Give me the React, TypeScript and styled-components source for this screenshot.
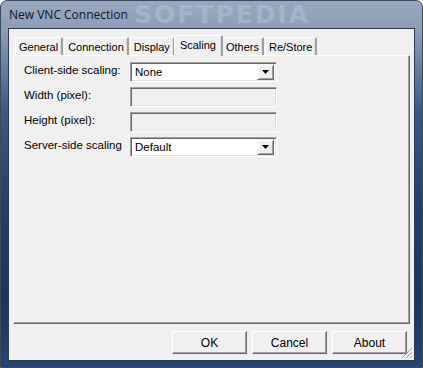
import { useState } from 'react';
import styled, { createGlobalStyle } from 'styled-components';

const GlobalStyle = createGlobalStyle`
  html, body {
    margin: 0;
    padding: 0;
    background: #ffffff;
  }
  body {
    font-family: Tahoma, "Liberation Sans", Arial, sans-serif;
    font-size: 11.5px;
    color: #000;
  }
`;

const Window = styled.div`
  position: relative;
  width: 423px;
  height: 368px;
  box-sizing: border-box;
  display: flex;
  flex-direction: column;
  padding: 0 7px 6px 7px;
  border: 1px solid #3c4a60;
  border-radius: 7px 7px 0 0;
  background: linear-gradient(
    to bottom,
    #9aa8be 0px,
    #8d9cb5 30px,
    #6f84a4 60px,
    #3d5882 110px,
    #26406a 200px,
    #1c345b 300px,
    #2a4570 368px
  );
  overflow: hidden;
`;

const TitleBar = styled.div`
  position: relative;
  height: 27px;
  display: flex;
  align-items: center;
  padding-left: 1px;
  font-family: "Open Sans", "Noto Sans", sans-serif;
  font-size: 12px;
  color: #101828;
`;

const Watermark = styled.div`
  position: absolute;
  left: 126px;
  top: 0;
  height: 27px;
  display: flex;
  align-items: center;
  font-family: "DejaVu Sans", sans-serif;
  font-weight: bold;
  font-size: 25px;
  line-height: 27px;
  letter-spacing: 2px;
  color: rgba(190, 208, 232, 0.4);
  pointer-events: none;
  white-space: nowrap;
`;

const Client = styled.div`
  flex: 1;
  display: flex;
  flex-direction: column;
  background: #f0f0f0;
  border: 1px solid #2c3a50;
  padding: 6px 4px 6px 4px;
  min-height: 0;
`;

const TabStrip = styled.div`
  display: flex;
  align-items: flex-end;
  gap: 1px;
  height: 20px;
  padding-left: 2px;
  position: relative;
  z-index: 1;
`;

const Tab = styled.div<{ $active?: boolean }>`
  box-sizing: border-box;
  height: ${({ $active }) => ($active ? '21px' : '18px')};
  margin-bottom: ${({ $active }) => ($active ? '-1px' : '0')};
  margin-left: ${({ $active }) => ($active ? '-2px' : '0')};
  margin-right: ${({ $active }) => ($active ? '-2px' : '0')};
  padding: ${({ $active }) => ($active ? '2px 5px 0 5px' : '2px 3px 0 3px')};
  background: #f0f0f0;
  border-top: 1px solid #ffffff;
  border-left: 1px solid #ffffff;
  border-right: 2px solid #a0a0a0;
  box-shadow: inset -1px 0 0 #dcdcdc;
  border-radius: 2px 2px 0 0;
  color: #000;
  line-height: 14px;
  white-space: nowrap;
  font-size: 11px;
  position: relative;
  z-index: ${({ $active }) => ($active ? 2 : 1)};
`;

const Panel = styled.div`
  flex: 1;
  box-sizing: border-box;
  border-top: 1px solid #ffffff;
  border-left: 1px solid #ffffff;
  border-right: 1px solid #696969;
  border-bottom: 1px solid #696969;
  box-shadow: inset -1px -1px 0 #a0a0a0;
  padding: 6px 10px;
`;

const FormGrid = styled.div`
  display: grid;
  grid-template-columns: 106px 147px;
  grid-auto-rows: 20px;
  row-gap: 5px;
`;

const FieldLabel = styled.label`
  font-size: 11.5px;
  line-height: 14px;
  padding-top: 1px;
  white-space: nowrap;
`;

const Sunken = styled.div<{ $disabled?: boolean }>`
  box-sizing: border-box;
  height: 20px;
  display: flex;
  align-items: center;
  border-top: 1px solid #a0a0a0;
  border-left: 1px solid #a0a0a0;
  border-right: 1px solid #ffffff;
  border-bottom: 1px solid #ffffff;
  box-shadow: inset 1px 1px 0 #696969, inset -1px -1px 0 #e3e3e3;
  background: ${({ $disabled }) => ($disabled ? '#f0f0f0' : '#ffffff')};
  padding: 2px;
`;

const ComboText = styled.div`
  flex: 1;
  padding-left: 2px;
  font-size: 11.5px;
  line-height: 14px;
`;

const ComboButton = styled.div`
  box-sizing: border-box;
  width: 17px;
  height: 16px;
  display: flex;
  align-items: center;
  justify-content: center;
  background: #f0f0f0;
  border-top: 1px solid #f0f0f0;
  border-left: 1px solid #f0f0f0;
  border-right: 1px solid #696969;
  border-bottom: 1px solid #696969;
  box-shadow: inset 1px 1px 0 #ffffff, inset -1px -1px 0 #a0a0a0;
`;

const ButtonRow = styled.div`
  display: flex;
  justify-content: flex-end;
  gap: 5px;
  padding-top: 7px;
  padding-right: 3px;
`;

const PushButton = styled.button`
  box-sizing: border-box;
  width: 75px;
  height: 23px;
  background: #f0f0f0;
  border-top: 1px solid #ffffff;
  border-left: 1px solid #ffffff;
  border-right: 1px solid #696969;
  border-bottom: 1px solid #696969;
  box-shadow: inset -1px -1px 0 #a0a0a0;
  font-family: inherit;
  font-size: 12px;
  color: #000;
  padding: 0;
`;

const Grip = styled.svg`
  position: absolute;
  right: 9px;
  bottom: 8px;
`;

function Combo({ value }: { value: string }) {
  return (
    <Sunken>
      <ComboText>{value}</ComboText>
      <ComboButton>
        <svg width="7" height="4" viewBox="0 0 7 4">
          <path d="M0 0H7L3.5 4Z" fill="#000" />
        </svg>
      </ComboButton>
    </Sunken>
  );
}

const TABS = ['General', 'Connection', 'Display', 'Scaling', 'Others', 'Re/Store'];

export default function App() {
  const [active, setActive] = useState('Scaling');

  return (
    <>
      <GlobalStyle />
      <Window>
        <TitleBar>
          New VNC Connection
          <Watermark>SOFTPEDIA</Watermark>
        </TitleBar>
        <Client>
          <TabStrip>
            {TABS.map((t) => (
              <Tab key={t} $active={t === active} onClick={() => setActive(t)}>
                {t}
              </Tab>
            ))}
          </TabStrip>
          <Panel>
            <FormGrid>
              <FieldLabel>Client-side scaling:</FieldLabel>
              <Combo value="None" />
              <FieldLabel>Width (pixel):</FieldLabel>
              <Sunken $disabled />
              <FieldLabel>Height (pixel):</FieldLabel>
              <Sunken $disabled />
              <FieldLabel>Server-side scaling</FieldLabel>
              <Combo value="Default" />
            </FormGrid>
          </Panel>
          <ButtonRow>
            <PushButton>OK</PushButton>
            <PushButton>Cancel</PushButton>
            <PushButton>About</PushButton>
          </ButtonRow>
        </Client>
        <Grip width="12" height="12" viewBox="0 0 12 12">
          <path d="M11 1L1 11M11 5L5 11M11 9L9 11" stroke="#a0a0a0" strokeWidth="1" />
          <path d="M12 2L2 12M12 6L6 12M12 10L10 12" stroke="#ffffff" strokeWidth="1" />
        </Grip>
      </Window>
    </>
  );
}
